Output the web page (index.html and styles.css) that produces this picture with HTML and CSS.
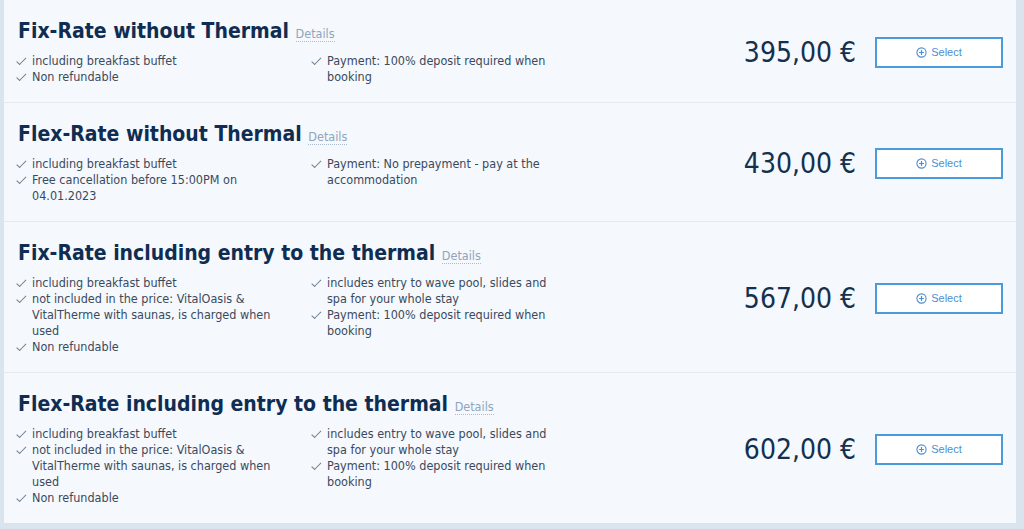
FILE: index.html
```html
<!DOCTYPE html>
<html lang="en">
<head>
<meta charset="utf-8">
<title>Rates</title>
<link rel="stylesheet" href="styles.css">
</head>
<body>
<div class="card">
  <div class="rate">
    <div class="info">
      <h2 class="title">Fix-Rate without Thermal <a class="details" href="#">Details</a></h2>
      <div class="cols">
        <ul class="list">
          <li>including breakfast buffet</li>
          <li>Non refundable</li>
        </ul>
        <ul class="list">
          <li>Payment: 100% deposit required when booking</li>
        </ul>
      </div>
    </div>
    <div class="price">395,00 €</div>
    <button class="select"><svg class="plus" viewBox="0 0 12 12" width="11" height="11"><circle cx="6" cy="6" r="5" fill="none" stroke="currentColor" stroke-width="1.2"/><path d="M6 3.4v5.2M3.4 6h5.2" stroke="currentColor" stroke-width="1.3"/></svg>Select</button>
  </div>
  <div class="rate">
    <div class="info">
      <h2 class="title">Flex-Rate without Thermal <a class="details" href="#">Details</a></h2>
      <div class="cols">
        <ul class="list">
          <li>including breakfast buffet</li>
          <li>Free cancellation before 15:00PM on 04.01.2023</li>
        </ul>
        <ul class="list">
          <li>Payment: No prepayment - pay at the accommodation</li>
        </ul>
      </div>
    </div>
    <div class="price">430,00 €</div>
    <button class="select"><svg class="plus" viewBox="0 0 12 12" width="11" height="11"><circle cx="6" cy="6" r="5" fill="none" stroke="currentColor" stroke-width="1.2"/><path d="M6 3.4v5.2M3.4 6h5.2" stroke="currentColor" stroke-width="1.3"/></svg>Select</button>
  </div>
  <div class="rate">
    <div class="info">
      <h2 class="title">Fix-Rate including entry to the thermal <a class="details" href="#">Details</a></h2>
      <div class="cols">
        <ul class="list">
          <li>including breakfast buffet</li>
          <li>not included in the price: VitalOasis &amp; VitalTherme with saunas, is charged when used</li>
          <li>Non refundable</li>
        </ul>
        <ul class="list">
          <li>includes entry to wave pool, slides and spa for your whole stay</li>
          <li>Payment: 100% deposit required when booking</li>
        </ul>
      </div>
    </div>
    <div class="price">567,00 €</div>
    <button class="select"><svg class="plus" viewBox="0 0 12 12" width="11" height="11"><circle cx="6" cy="6" r="5" fill="none" stroke="currentColor" stroke-width="1.2"/><path d="M6 3.4v5.2M3.4 6h5.2" stroke="currentColor" stroke-width="1.3"/></svg>Select</button>
  </div>
  <div class="rate">
    <div class="info">
      <h2 class="title">Flex-Rate including entry to the thermal <a class="details" href="#">Details</a></h2>
      <div class="cols">
        <ul class="list">
          <li>including breakfast buffet</li>
          <li>not included in the price: VitalOasis &amp; VitalTherme with saunas, is charged when used</li>
          <li>Non refundable</li>
        </ul>
        <ul class="list">
          <li>includes entry to wave pool, slides and spa for your whole stay</li>
          <li>Payment: 100% deposit required when booking</li>
        </ul>
      </div>
    </div>
    <div class="price">602,00 €</div>
    <button class="select"><svg class="plus" viewBox="0 0 12 12" width="11" height="11"><circle cx="6" cy="6" r="5" fill="none" stroke="currentColor" stroke-width="1.2"/><path d="M6 3.4v5.2M3.4 6h5.2" stroke="currentColor" stroke-width="1.3"/></svg>Select</button>
  </div>
</div>
</body>
</html>
```

FILE: styles.css
```css
* { box-sizing: border-box; }
html, body { margin: 0; padding: 0; }
body {
  background: #dae4ee;
  font-family: "DejaVu Sans Condensed", "DejaVu Sans", sans-serif;
  color: #3a4a5c;
  height: 529px;
  overflow: hidden;
}
.card {
  background: #f5f8fc;
  margin: 0 8px 0 4px;
}
.rate {
  display: flex;
  align-items: center;
  padding: 19px 13px 17px 14px;
  border-bottom: 1px solid #e5eaf0;
}
.rate:last-child { border-bottom: none; }
.info { flex: 1; }
.title {
  margin: 0 0 10px;
  font-size: 21px;
  line-height: 24px;
  height: 24px;
  font-weight: bold;
  color: #0f2d52;
}
.details {
  font-size: 12.5px;
  line-height: 1;
  font-weight: normal;
  color: #8fa5bc;
  text-decoration: none;
  border-bottom: 1px dotted #a9bbcd;
}
.cols {
  display: grid;
  grid-template-columns: 295px 255px;
}
.list {
  list-style: none;
  margin: 0;
  padding: 0;
}
.cols .list:first-child { padding-right: 30px; }
.list li {
  position: relative;
  padding-left: 14px;
  font-size: 12.5px;
  line-height: 16px;
}
.list li::before {
  content: "";
  position: absolute;
  width: 4px;
  height: 8px;
  border-right: 1px solid #6f7f91;
  border-bottom: 1px solid #6f7f91;
  transform: skewX(-8deg) rotate(40deg);
  transform-origin: 0 0;
  left: 5px;
  top: 2px;
}
.price {
  font-size: 28px;
  color: #14304f;
  margin-right: 19px;
}
.select {
  width: 128px;
  height: 31px;
  background: #fff;
  border: 2px solid #4b9ad9;
  color: #4b8fd1;
  font-family: "Liberation Sans", Arial, sans-serif;
  font-size: 11px;
  display: flex;
  align-items: center;
  justify-content: center;
  gap: 4px;
  padding: 0;
}
.plus { display: block; }
```
